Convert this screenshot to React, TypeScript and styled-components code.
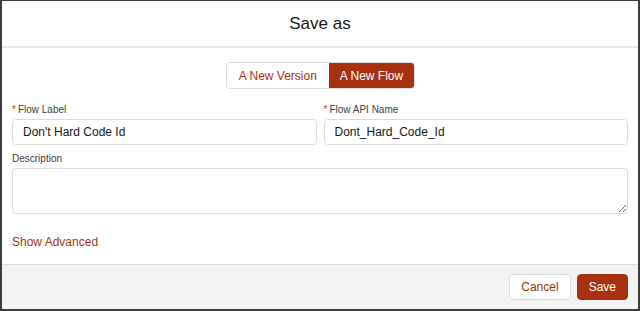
import styled, { createGlobalStyle } from 'styled-components'

const BRAND = '#a8320f'

const GlobalStyle = createGlobalStyle`
  html, body {
    margin: 0;
    padding: 0;
    background: #fff;
  }
  body {
    font-family: 'Liberation Sans', Arial, sans-serif;
    color: #181818;
  }
`

const Frame = styled.div`
  box-sizing: border-box;
  width: 640px;
  height: 311px;
  border: 2px solid #3c3c3c;
  border-top-width: 1px;
  display: flex;
  flex-direction: column;
  background: #fff;
`

const Header = styled.div`
  height: 45px;
  border-bottom: 2px solid #e5e5e5;
  display: flex;
  align-items: center;
  justify-content: center;
  font-size: 17px;
  color: #181818;
`

const Body = styled.div`
  flex: 1;
  padding: 14px 10px 0 10px;
  display: flex;
  flex-direction: column;
`

const ToggleGroup = styled.div`
  align-self: center;
  display: flex;
  border: 1px solid #dddbda;
  border-radius: 4px;
  overflow: hidden;
  height: 25px;
  margin-left: 1px;
`

const ToggleButton = styled.button<{ $active?: boolean }>`
  border: none;
  font-family: inherit;
  font-size: 12px;
  padding: 0 ${({ $active }) => ($active ? '11px' : '12px')};
  background: ${({ $active }) => ($active ? BRAND : '#fff')};
  color: ${({ $active }) => ($active ? '#fff' : BRAND)};
  cursor: pointer;
`

const Row = styled.div`
  display: grid;
  grid-template-columns: 1fr 1fr;
  column-gap: 7px;
  margin-top: 13px;
`

const Field = styled.div`
  display: flex;
  flex-direction: column;
`

const Label = styled.label`
  font-size: 10px;
  color: #3e3e3c;
  height: 14px;
  margin-bottom: 3px;
  display: flex;
  align-items: center;
`

const Required = styled.abbr`
  color: #c23934;
  text-decoration: none;
  margin-right: 2px;
  font-size: 10px;
`

const Input = styled.input`
  box-sizing: border-box;
  height: 26px;
  border: 1px solid #dddbda;
  border-radius: 4px;
  padding: 0 10px;
  font-family: inherit;
  font-size: 12px;
  color: #181818;
  outline: none;
`

const DescField = styled(Field)`
  margin-top: 6px;
`

const TextArea = styled.textarea`
  box-sizing: border-box;
  height: 46px;
  border: 1px solid #dddbda;
  border-radius: 4px;
  font-family: inherit;
  resize: vertical;
  outline: none;
`

const AdvancedLink = styled.a`
  margin-top: 21px;
  font-size: 12px;
  color: ${BRAND};
  cursor: pointer;
`

const Footer = styled.div`
  height: 45px;
  box-sizing: border-box;
  border-top: 1px solid #dddbda;
  background: #f3f3f3;
  display: flex;
  align-items: center;
  justify-content: flex-end;
  gap: 6px;
  padding: 0 10px 0 0;
`

const FooterButton = styled.button<{ $primary?: boolean }>`
  height: 26px;
  box-sizing: border-box;
  border-radius: 4px;
  font-family: inherit;
  font-size: 12px;
  padding: 0 ${({ $primary }) => ($primary ? '11px' : '11px')};
  border: 1px solid ${({ $primary }) => ($primary ? BRAND : '#dddbda')};
  background: ${({ $primary }) => ($primary ? BRAND : '#fff')};
  color: ${({ $primary }) => ($primary ? '#fff' : BRAND)};
  cursor: pointer;
`

export default function App() {
  return (
    <>
      <GlobalStyle />
      <Frame>
        <Header>Save as</Header>
        <Body>
          <ToggleGroup>
            <ToggleButton>A New Version</ToggleButton>
            <ToggleButton $active>A New Flow</ToggleButton>
          </ToggleGroup>
          <Row>
            <Field>
              <Label>
                <Required title='required'>*</Required>Flow Label
              </Label>
              <Input defaultValue="Don't Hard Code Id" />
            </Field>
            <Field>
              <Label>
                <Required title='required'>*</Required>Flow API Name
              </Label>
              <Input defaultValue='Dont_Hard_Code_Id' />
            </Field>
          </Row>
          <DescField>
            <Label>Description</Label>
            <TextArea />
          </DescField>
          <AdvancedLink>Show Advanced</AdvancedLink>
        </Body>
        <Footer>
          <FooterButton>Cancel</FooterButton>
          <FooterButton $primary>Save</FooterButton>
        </Footer>
      </Frame>
    </>
  )
}
